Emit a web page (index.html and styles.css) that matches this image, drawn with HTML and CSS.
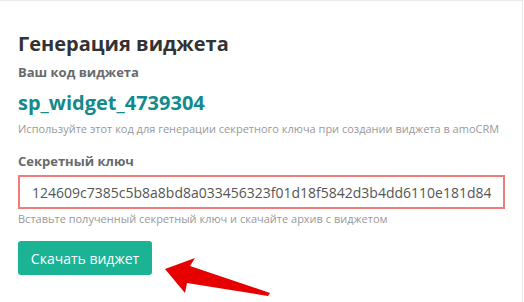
FILE: index.html
```html
<!DOCTYPE html>
<html lang="ru">
<head>
<meta charset="utf-8">
<link rel="stylesheet" href="styles.css">
</head>
<body>
<div class="card">
  <h2 class="title">Генерация виджета</h2>
  <div class="label">Ваш код виджета</div>
  <div class="code">sp_widget_4739304</div>
  <div class="help">Используйте этот код для генерации секретного ключа при создании виджета в amoCRM</div>
  <div class="label label-key">Секретный ключ</div>
  <input class="key-input" type="text" value="124609c7385c5b8a8bd8a033456323f01d18f5842d3b4dd6110e181d84">
  <div class="help help-key">Вставьте полученный секретный ключ и скачайте архив с виджетом</div>
  <button class="btn" type="button">Скачать виджет</button>
  <svg class="arrow" width="120" height="50" viewBox="0 0 120 50">
    <polygon points="5,18 35,7 30,15 110,42 108,45 27,32 25,42" fill="#e60000"/>
  </svg>
</div>
</body>
</html>
```
FILE: styles.css
```css
html, body {
  margin: 0;
  padding: 0;
  background: #ffffff;
}
body {
  font-family: "Open Sans", "Liberation Sans", sans-serif;
  width: 524px;
  height: 302px;
  overflow: hidden;
}
.card {
  position: relative;
  box-sizing: border-box;
  width: 523px;
  height: 302px;
  border-top: 1px solid #e7eaec;
  border-right: 1px solid #e7eaec;
  padding: 31px 0 0 18px;
  display: flex;
  flex-direction: column;
  align-items: flex-start;
}
.title {
  margin: 0;
  font-size: 20px;
  line-height: 24px;
  font-weight: 700;
  color: #333333;
}
.label {
  margin-top: 7px;
  font-size: 13px;
  line-height: 18px;
  font-weight: 700;
  color: #676a6c;
}
.code {
  margin-top: 9px;
  font-size: 20px;
  line-height: 26px;
  font-weight: 700;
  color: #138a8c;
}
.help {
  margin-top: 5px;
  font-size: 11px;
  line-height: 15px;
  color: #999999;
}
.label-key {
  margin-top: 16px;
}
.key-input {
  margin: 5px 0 0;
  box-sizing: border-box;
  width: 487px;
  height: 34px;
  border: 2px solid #ef7b7b;
  padding: 0 12px;
  font-family: "Open Sans", "Liberation Sans", sans-serif;
  font-size: 14px;
  color: #555555;
  background: #ffffff;
  outline: none;
}
.help-key {
  margin-top: 2px;
}
.btn {
  margin-top: 15px;
  box-sizing: border-box;
  width: 134px;
  height: 34px;
  border: none;
  border-radius: 3px;
  background: #1ab394;
  color: #ffffff;
  font-family: "Open Sans", "Liberation Sans", sans-serif;
  font-size: 14px;
  padding: 0;
}
.arrow {
  position: absolute;
  left: 160px;
  top: 250px;
}
```
